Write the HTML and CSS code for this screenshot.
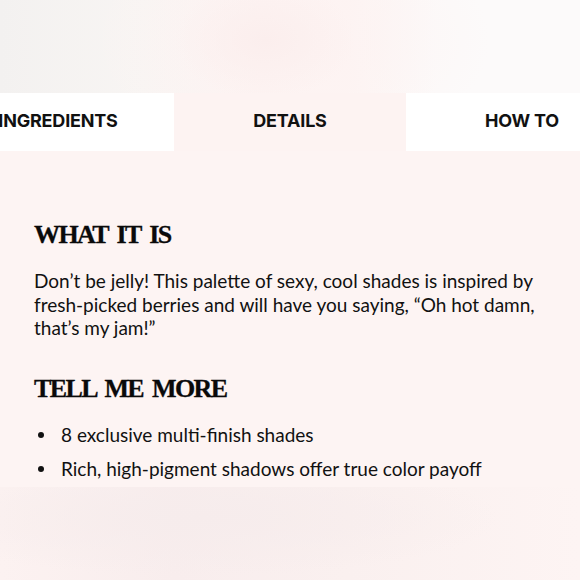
FILE: index.html
```html
<!DOCTYPE html>
<html>
<head>
<meta charset="utf-8">
<link rel="stylesheet" href="styles.css">
</head>
<body>
<div class="hero"></div>
<nav class="tabs">
  <div class="tab">INGREDIENTS</div>
  <div class="tab active">DETAILS</div>
  <div class="tab">HOW TO</div>
</nav>
<main class="content">
  <h2 class="heading">WHAT IT IS</h2>
  <p class="text">Don’t be jelly! This palette of sexy, cool shades is inspired by fresh-picked berries and will have you saying, “Oh hot damn, that’s my jam!”</p>
  <h2 class="heading more">TELL ME MORE</h2>
  <ul class="list">
    <li>8 exclusive multi-finish shades</li>
    <li>Rich, high-pigment shadows offer true color payoff</li>
  </ul>
</main>
<div class="footer"></div>
</body>
</html>
```

FILE: styles.css
```css
html, body {
  margin: 0;
  padding: 0;
}
body {
  width: 580px;
  height: 580px;
  overflow: hidden;
  background: #fdf4f3;
  color: #111;
}
.hero {
  height: 93px;
  background:
    radial-gradient(ellipse 90px 60px at 265px 40px, #fbeeed 0%, rgba(251,238,237,0) 100%),
    radial-gradient(ellipse 200px 120px at 290px 40px, #fdf3f2 0%, rgba(253,243,242,0) 100%),
    linear-gradient(90deg, #f3f1f0 0%, #f8f5f3 25%, #fdf3f2 45%, #fdf4f3 60%, #fcfafa 75%, #fcfafa 100%);
}
.tabs {
  display: flex;
  width: 580px;
  overflow: hidden;
  height: 58px;
}
.tab {
  flex: 0 0 232px;
  display: flex;
  align-items: center;
  justify-content: center;
  padding-bottom: 3px;
  box-sizing: border-box;
  background: #fff;
  font-family: "Inter", "Liberation Sans", sans-serif;
  font-weight: 700;
  font-size: 18px;
  color: #111;
  letter-spacing: -0.2px;
}
.tab:first-child {
  margin-left: -58px;
}
.tab.active {
  background: #fdf3f2;
}
.content {
  padding: 70px 34px 0 34px;
  height: 266px;
  font-family: "Lato", "Liberation Sans", sans-serif;
}
.heading {
  margin: 0;
  font-family: "Liberation Serif", serif;
  font-weight: 700;
  font-size: 26px;
  line-height: 28px;
  letter-spacing: -1.6px;
  word-spacing: 4px;
  color: #0a0a0a;
  -webkit-text-stroke: 0.3px #0a0a0a;
}
.text {
  margin: 20px 0 0 0;
  font-size: 19px;
  line-height: 23.5px;
  color: #111;
}
.heading.more {
  margin-top: 35px;
}
.list {
  list-style: none;
  margin: 20px 0 0 0;
  padding: 0;
  font-size: 19px;
  line-height: 24px;
}
.list li {
  display: flex;
  align-items: center;
  gap: 17px;
  margin-bottom: 10px;
}
.list li::before {
  content: "";
  flex: 0 0 6px;
  height: 6px;
  margin-left: 4px;
  border-radius: 50%;
  background: #111;
}
.footer {
  height: 94px;
  background:
    radial-gradient(ellipse 300px 60px at 200px 30px, #f6ecec 0%, rgba(246,236,236,0) 100%),
    linear-gradient(90deg, #fcf2f1 0%, #f8eded 30%, #faf0ef 60%, #fdf4f3 100%);
}
```
